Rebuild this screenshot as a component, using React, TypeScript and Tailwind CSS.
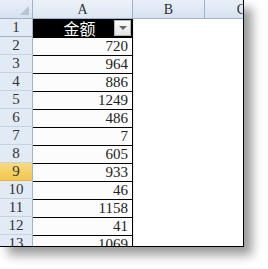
import React from "react";

const amounts = [720, 964, 886, 1249, 486, 7, 605, 933, 46, 1158, 41, 1069];

export default function App() {
  return (
    <div className="w-[268px] h-[269px] bg-white overflow-hidden">
      {/* sheet */}
      <div
        className="w-[244px] h-[247px] overflow-hidden bg-white border-r border-b border-black shadow-[8px_8px_10px_rgba(0,0,0,0.4)]"
        style={{ fontFamily: '"Liberation Serif", serif' }}
      >
        {/* column headers */}
        <div className="flex h-[19px] border-b border-[#9db3cc]">
          <div className="w-[33px] relative bg-gradient-to-b from-[#e9eff8] to-[#d6e2f0] border-r border-[#9db3cc]">
            <div className="absolute right-[3px] bottom-[3px] w-0 h-0 border-l-[9px] border-l-transparent border-b-[9px] border-b-[#b8c4d2]" />
          </div>
          <div className="w-[100px] flex items-center justify-center text-[14px] text-[#333] bg-gradient-to-b from-[#edf2f9] to-[#dce6f2] border-r border-[#9db3cc]">
            A
          </div>
          <div className="w-[72px] flex items-center justify-center text-[14px] text-[#333] bg-gradient-to-b from-[#e9eff8] to-[#d6e2f0] border-r border-[#9db3cc]">
            B
          </div>
          <div className="w-[38px] flex items-center justify-end text-[14px] text-[#333] bg-gradient-to-b from-[#e9eff8] to-[#d6e2f0] overflow-hidden">
            <span className="translate-x-[3px]">C</span>
          </div>
        </div>

        {/* row 1 - title */}
        <div className="flex h-[18px]">
          <div className="w-[33px] flex items-center justify-center text-[15px] text-[#333] bg-[#e2eaf5] border-r border-b border-[#9db3cc]">
            1
          </div>
          <div className="w-[100px] flex items-center bg-black border-r border-black">
            <div
              className="flex-1 text-center text-white text-[16px] leading-none pl-[12px]"
              style={{ fontFamily: '"Noto Sans CJK SC", sans-serif' }}
            >
              金额
            </div>
            <div className="w-[17px] h-[16px] mr-[1px] flex items-center justify-center bg-gradient-to-b from-[#fbfbfb] to-[#e4e4e4] border border-[#b5b5b5]">
              <div className="w-0 h-0 border-l-[4px] border-l-transparent border-r-[4px] border-r-transparent border-t-[4px] border-t-[#666]" />
            </div>
          </div>
          <div className="flex-1 border-l border-dotted border-[#e2e2e2]" />
        </div>

        {/* data rows */}
        {amounts.map((v, i) => (
          <div key={i} className="flex h-[18px]">
            <div
              className={`w-[33px] flex items-center justify-center text-[15px] text-[#333] border-r border-[#9db3cc] border-b ${
                i === 7
                  ? "bg-gradient-to-b from-[#f9dc7c] to-[#f3c54e] border-b-[#e3b44a]"
                  : "bg-[#e2eaf5] border-b-[#c3d3e6]"
              }`}
            >
              {i + 2}
            </div>
            <div className="w-[100px] flex items-center justify-end pr-[4px] text-[15px] text-[#222] bg-[#fcfcfc] border-t border-r border-black">
              {v}
            </div>
            <div className="flex-1 border-l border-dotted border-[#e2e2e2]" />
          </div>
        ))}
      </div>
    </div>
  );
}
